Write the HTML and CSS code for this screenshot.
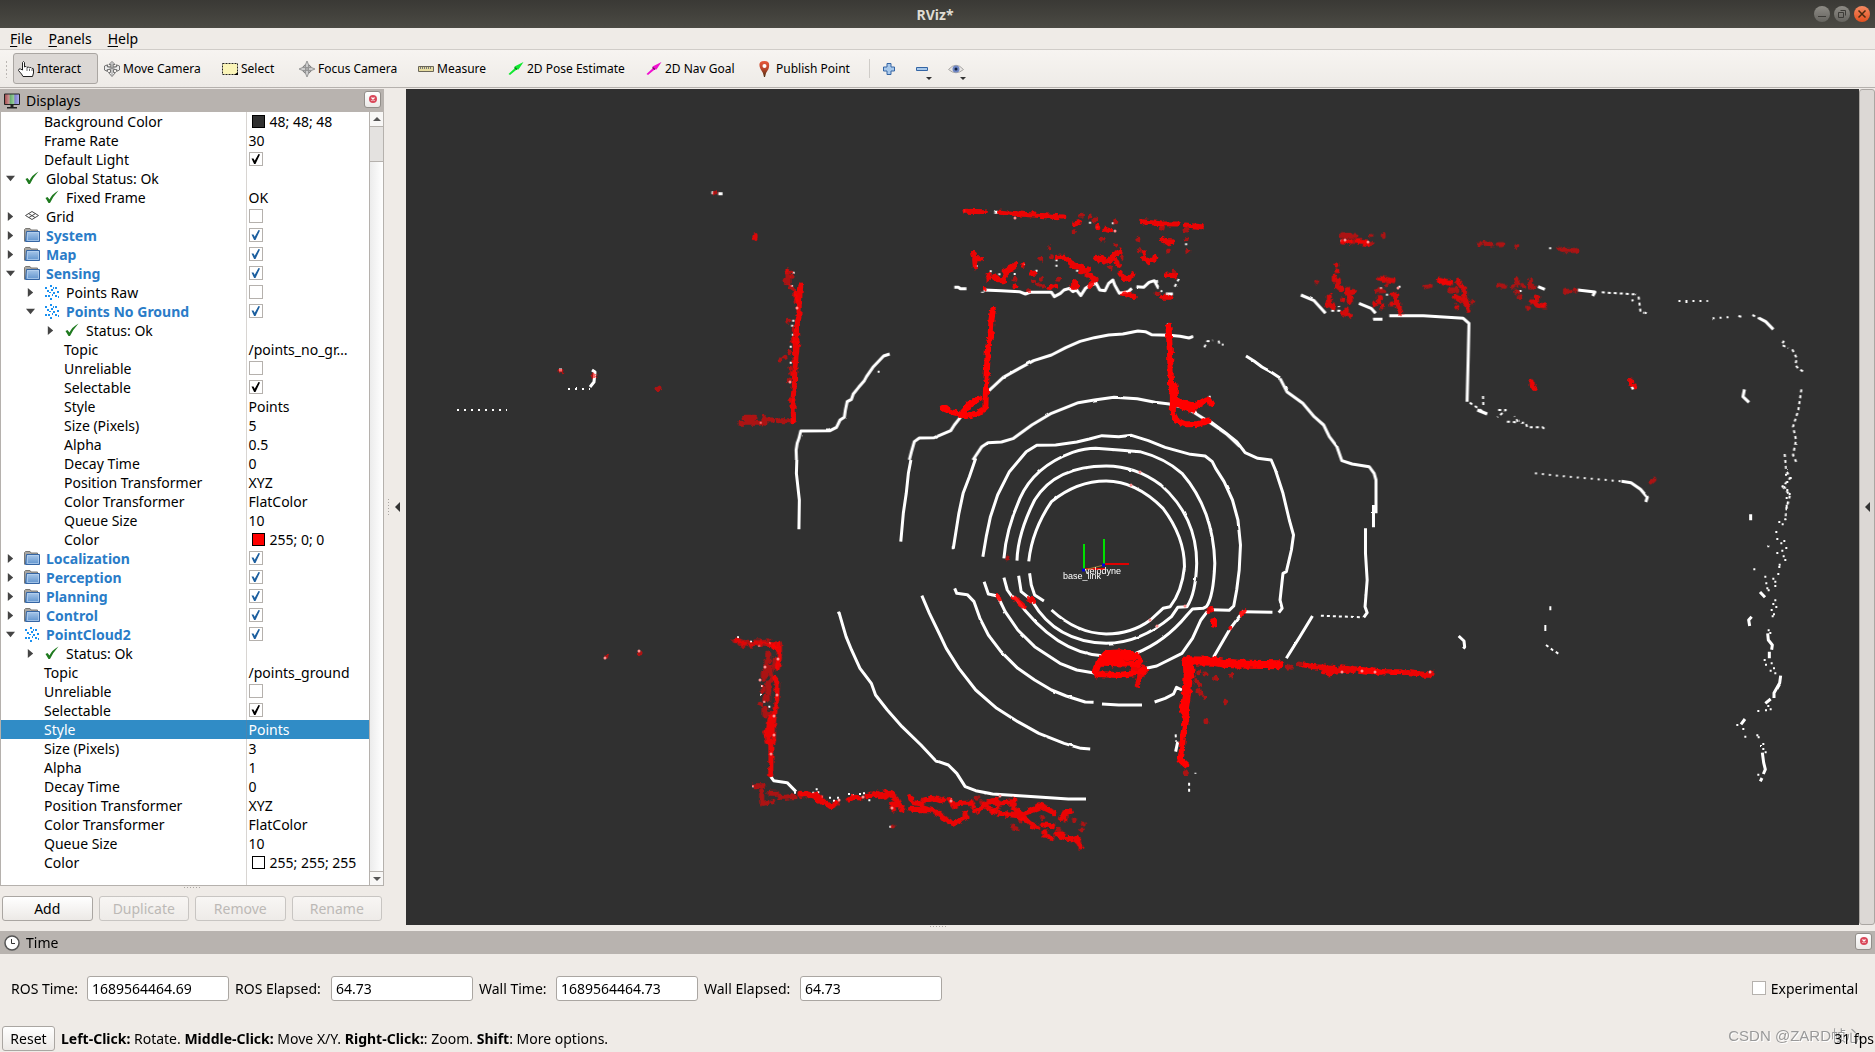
FILE: index.html
```html
<!DOCTYPE html>
<html lang="en">
<head>
<meta charset="utf-8">
<title>RViz*</title>
<link rel="stylesheet" href="styles.css">
</head>
<body>
<svg class="defs" aria-hidden="true">
  <defs>
    <linearGradient id="fold" x1="0" y1="0" x2="0" y2="1"><stop offset="0" stop-color="#a9c8ea"/><stop offset="1" stop-color="#5f93cd"/></linearGradient>
    <linearGradient id="rgb" x1="0" x2="1" y1="0" y2="0"><stop offset="0" stop-color="#a04848"/><stop offset=".33" stop-color="#cf9c9c"/><stop offset=".34" stop-color="#5fa86a"/><stop offset=".66" stop-color="#9fd0a0"/><stop offset=".67" stop-color="#7a7ac8"/><stop offset="1" stop-color="#b0b0f0"/></linearGradient>
    <linearGradient id="pin" x1="0" y1="0" x2="0" y2="1"><stop offset="0" stop-color="#e8583a"/><stop offset=".5" stop-color="#b8452a"/><stop offset="1" stop-color="#4a3010"/></linearGradient>
    <filter id="jitter" filterUnits="userSpaceOnUse" x="406" y="89" width="1453" height="836"><feTurbulence type="fractalNoise" baseFrequency=".22" numOctaves="2" seed="4"/><feDisplacementMap in="SourceGraphic" scale="5" xChannelSelector="R" yChannelSelector="G"/></filter>
    <filter id="jitter-fine" filterUnits="userSpaceOnUse" x="406" y="89" width="1453" height="836"><feTurbulence type="fractalNoise" baseFrequency=".12" numOctaves="1" seed="2"/><feDisplacementMap in="SourceGraphic" scale="2" xChannelSelector="R" yChannelSelector="G"/></filter>
    <symbol id="i-folder" viewBox="0 0 16 16"><path d="M.5 14.500V2.500L1.500 1.500H6l1 1.500h6.500V6" fill="#a8a6a2" stroke="#7a7874"/><path d="M2.500 4.500h13v10h-14z" fill="url(#fold)" stroke="#3465a4"/><path d="M3.500 5.500h11v8h-11z" fill="none" stroke="#b9d3ef" stroke-opacity=".7"/></symbol>
    <symbol id="i-ok" viewBox="0 0 16 16"><path d="M1.500 9 3.500 8 5.500 10.500 Q8 5 14.500 1.500 Q9 7.500 6 14 L4.500 14Z" fill="#1f7a1f"/></symbol>
    <symbol id="i-grid" viewBox="0 0 16 16"><path d="M1.500 7.500 8 3.500l6.500 4L8 11.500zM4.500 5.500l6.500 4M11.500 5.500 5 9.500" fill="none" stroke="#4a4a4a"/></symbol>
    <symbol id="i-cloud" viewBox="0 0 16 16"><path d="M6 1h2v2H6zM1 3h2v2H1zM11 3h2v2h-2zM7 5h2v2H7zM3 6h2v2H3zM13 7h2v2h-2zM9 8h2v2H9zM5 8h2v1H5zM1 11h2v2H1zM4 11h2v2H4zM8 10h1v2H8zM11 11h2v2h-2zM6 14h2v2H6zM14 12h1v2h-1zM9 3h1v2H9z" fill="#1a90f0"/></symbol>
    <symbol id="i-close" viewBox="0 0 8 8"><circle cx="4" cy="4" r="4" fill="#d9485a"/><path d="M2.500 2.500l3 3m0-3-3 3" stroke="#fff" stroke-width="1.200"/></symbol>
  </defs>
</svg>

<header class="titlebar">
  <h1>RViz*</h1>
  <div class="window-buttons">
    <button aria-label="Minimize"><svg viewBox="0 0 16 16"><path d="M4 10.500h8" stroke="#3c3b37"/></svg></button>
    <button aria-label="Restore"><svg viewBox="0 0 16 16"><path d="M4.500 6.500h5v5h-5zM6.500 4.500h5v5" fill="none" stroke="#3c3b37"/></svg></button>
    <button class="quit" aria-label="Close window"><svg viewBox="0 0 16 16"><path d="M4.500 4.500l7 7m0-7-7 7" stroke="#4a2a10" stroke-width="1.500"/></svg></button>
  </div>
</header>

<nav class="menubar">
  <a href="#file"><u>F</u>ile</a>
  <a href="#panels"><u>P</u>anels</a>
  <a href="#help"><u>H</u>elp</a>
</nav>

<div class="toolbar" role="toolbar">
  <span class="grip"></span>
  <button class="active"><svg viewBox="0 0 16 16"><path d="M4.500 9V1.500Q5.500-.5 6.500 1.500V6Q8 4.500 9 6.500 10.500 5 11.500 7 13 5.500 14 7.500 15.500 6.500 15.500 9v3l-1 3.500H5L3.500 13 .5 9.500Q1 7 2.500 8z" fill="#fff" stroke="#222"/><path d="M9 7v3m2.500-2v2M14 8v2" stroke="#444" stroke-width=".8"/></svg>Interact</button>
  <button><svg viewBox="0 0 16 16"><path d="M8 .5 11 3.500H9.200V6h3.300V3.800L15.500 5v4l-3 1.500V8.500H9.500v3H11.500L8 15.500 4.500 11.500h2v-3h-3v2L.5 9V5l3-1.200V6h3.300V3.500H5z" fill="#eee" stroke="#666" stroke-width=".9"/><path d="M2 4.500 14 9.500M14 4.500 2 9.500M8 2v12" stroke="#777" stroke-width=".7"/></svg>Move Camera</button>
  <button><svg viewBox="0 0 16 16"><path d="M.5 2.500h15v11H.5z" fill="#fbf5b8" stroke="#222" stroke-dasharray="2 1"/><path d="M16 11v3h-4z" fill="#000"/></svg>Select</button>
  <button><svg viewBox="0 0 16 16"><circle cx="8" cy="8" r="4.500" fill="#e4e4e4" stroke="#777"/><path d="M8 0l1.500 3.500v9L8 16l-1.500-3.500v-9zM0 8l3.500-1.500h9L16 8l-3.500 1.500h-9z" fill="#ccc" stroke="#888" stroke-width=".8"/><path d="M5 5l6 6m0-6-6 6" stroke="#999" stroke-width=".7"/></svg>Focus Camera</button>
  <button><svg viewBox="0 0 16 16"><path d="M.5 5.500h15v5H.5z" fill="#e6dca0" stroke="#6a6658"/><path d="M2.500 6v2m2-2v2m2-2v2m2-2v2m2-2v2m2-2v2" stroke="#777"/></svg>Measure</button>
  <button><svg viewBox="0 0 16 16"><path d="M.5 13 7 7l-.5-1.500L15.500 1 10.500 8.500 9 8.200 2 14z" fill="#10e830"/><path d="M6.500 6.500 9 8.500" stroke="#087818" stroke-width="1.500"/></svg>2D Pose Estimate</button>
  <button><svg viewBox="0 0 16 16"><path d="M.5 13 7 7l-.5-1.500L15.500 1 10.500 8.500 9 8.200 2 14z" fill="#f010d0"/><path d="M6.500 6.500 9 8.500" stroke="#700860" stroke-width="1.500"/></svg>2D Nav Goal</button>
  <button><svg viewBox="0 0 16 16"><path d="M7 16Q6 11 3.500 8 0 0 7.500 0 14 0 11.500 8 9 11 8 16z" fill="url(#pin)"/><circle cx="7.500" cy="5" r="2" fill="#fff"/></svg>Publish Point</button>
  <span class="rule"></span>
  <button class="tiny" aria-label="Add tool"><svg viewBox="0 0 16 16"><path d="M6 2.500h4V6h3.500v4H10v3.500H6V10H2.500V6H6z" fill="#a8c8ea" stroke="#3465a4"/></svg></button>
  <button class="tiny menu" aria-label="Remove tool"><svg viewBox="0 0 16 16"><path d="M2.500 6.500h11v3h-11z" fill="#a8c8ea" stroke="#3465a4"/></svg></button>
  <button class="tiny menu" aria-label="Toolbar visibility"><svg viewBox="0 0 16 16"><path d="M.5 8.500Q8 0 15.500 8.500 8 15 .5 8.500z" fill="#e8e6e4" stroke="#a8a6a4"/><circle cx="8" cy="8" r="3.500" fill="#6f86c4"/><circle cx="8" cy="8" r="1.500" fill="#102040"/></svg></button>
</div>

<main class="work">
  <section class="displays">
    <header class="dock-title">
      <svg class="ic" viewBox="0 0 16 16"><path d="M.5 1h15v10.500H.5z" fill="url(#rgb)" stroke="#222"/><path d="M6.500 12h3v2h-3zM3 14h10v1.500H3z" fill="#222"/></svg>
      <h2>Displays</h2>
      <button class="dock-close" aria-label="Close Displays"><svg><use href="#i-close"/></svg></button>
    </header>
    <div class="tree-frame">
      <table class="tree">
        <tbody>
        <tr class="l1"><th>Background Color</th><td><i class="swatch grey"></i>48; 48; 48</td></tr>
        <tr class="l1"><th>Frame Rate</th><td>30</td></tr>
        <tr class="l1"><th>Default Light</th><td><input type="checkbox" checked aria-label="Default Light"></td></tr>
        <tr class="l0 open"><th><svg class="ic"><use href="#i-ok"/></svg>Global Status: Ok</th><td></td></tr>
        <tr class="l1"><th><svg class="ic"><use href="#i-ok"/></svg>Fixed Frame</th><td>OK</td></tr>
        <tr class="l0 shut"><th><svg class="ic"><use href="#i-grid"/></svg>Grid</th><td><input type="checkbox" aria-label="Grid"></td></tr>
        <tr class="l0 shut on"><th><svg class="ic"><use href="#i-folder"/></svg>System</th><td><input type="checkbox" checked aria-label="System"></td></tr>
        <tr class="l0 shut on"><th><svg class="ic"><use href="#i-folder"/></svg>Map</th><td><input type="checkbox" checked aria-label="Map"></td></tr>
        <tr class="l0 open on"><th><svg class="ic"><use href="#i-folder"/></svg>Sensing</th><td><input type="checkbox" checked aria-label="Sensing"></td></tr>
        <tr class="l1 shut"><th><svg class="ic"><use href="#i-cloud"/></svg>Points Raw</th><td><input type="checkbox" aria-label="Points Raw"></td></tr>
        <tr class="l1 open on"><th><svg class="ic"><use href="#i-cloud"/></svg>Points No Ground</th><td><input type="checkbox" checked aria-label="Points No Ground"></td></tr>
        <tr class="l2 shut"><th><svg class="ic"><use href="#i-ok"/></svg>Status: Ok</th><td></td></tr>
        <tr class="l2"><th>Topic</th><td>/points_no_gr…</td></tr>
        <tr class="l2"><th>Unreliable</th><td><input type="checkbox" aria-label="Unreliable"></td></tr>
        <tr class="l2"><th>Selectable</th><td><input type="checkbox" checked aria-label="Selectable"></td></tr>
        <tr class="l2"><th>Style</th><td>Points</td></tr>
        <tr class="l2"><th>Size (Pixels)</th><td>5</td></tr>
        <tr class="l2"><th>Alpha</th><td>0.5</td></tr>
        <tr class="l2"><th>Decay Time</th><td>0</td></tr>
        <tr class="l2"><th>Position Transformer</th><td>XYZ</td></tr>
        <tr class="l2"><th>Color Transformer</th><td>FlatColor</td></tr>
        <tr class="l2"><th>Queue Size</th><td>10</td></tr>
        <tr class="l2"><th>Color</th><td><i class="swatch red"></i>255; 0; 0</td></tr>
        <tr class="l0 shut on"><th><svg class="ic"><use href="#i-folder"/></svg>Localization</th><td><input type="checkbox" checked aria-label="Localization"></td></tr>
        <tr class="l0 shut on"><th><svg class="ic"><use href="#i-folder"/></svg>Perception</th><td><input type="checkbox" checked aria-label="Perception"></td></tr>
        <tr class="l0 shut on"><th><svg class="ic"><use href="#i-folder"/></svg>Planning</th><td><input type="checkbox" checked aria-label="Planning"></td></tr>
        <tr class="l0 shut on"><th><svg class="ic"><use href="#i-folder"/></svg>Control</th><td><input type="checkbox" checked aria-label="Control"></td></tr>
        <tr class="l0 open on"><th><svg class="ic"><use href="#i-cloud"/></svg>PointCloud2</th><td><input type="checkbox" checked aria-label="PointCloud2"></td></tr>
        <tr class="l1 shut"><th><svg class="ic"><use href="#i-ok"/></svg>Status: Ok</th><td></td></tr>
        <tr class="l1"><th>Topic</th><td>/points_ground</td></tr>
        <tr class="l1"><th>Unreliable</th><td><input type="checkbox" aria-label="Unreliable"></td></tr>
        <tr class="l1"><th>Selectable</th><td><input type="checkbox" checked aria-label="Selectable"></td></tr>
        <tr class="l1 selected"><th>Style</th><td>Points</td></tr>
        <tr class="l1"><th>Size (Pixels)</th><td>3</td></tr>
        <tr class="l1"><th>Alpha</th><td>1</td></tr>
        <tr class="l1"><th>Decay Time</th><td>0</td></tr>
        <tr class="l1"><th>Position Transformer</th><td>XYZ</td></tr>
        <tr class="l1"><th>Color Transformer</th><td>FlatColor</td></tr>
        <tr class="l1"><th>Queue Size</th><td>10</td></tr>
        <tr class="l1"><th>Color</th><td><i class="swatch white"></i>255; 255; 255</td></tr>
        <tr class="filler"><th></th><td></td></tr>
        </tbody>
      </table>
      <div class="scrollbar"><span class="step up"></span><span class="thumb"></span><span class="step down"></span></div>
    </div>
    <span class="hgrip"></span>
    <div class="actions">
      <button>Add</button>
      <button disabled>Duplicate</button>
      <button disabled>Remove</button>
      <button disabled>Rename</button>
    </div>
  </section>
  <div class="splitter"><span class="vgrip"></span><span class="left-arrow"></span></div>

  <svg class="view" viewBox="406 89 1453 836" preserveAspectRatio="xMidYMid slice" role="img" aria-label="Lidar point cloud">
    <g class="ground" filter="url(#jitter-fine)">
      <path d="M1246 356l8 5 8 6 9 5 9 6"/>
      <path class="spaced" d="M457 410h50M568 389h22"/>
      <path d="M590 387l4-5 1-10-3-2M559 370h3"/>
      <!-- far arcs and the wall line north of the vehicle -->
      <g transform="translate(680 180) scale(.35714 .33333)">
        <path d="M587 522 570 528 540 562 522 590 516 602 500 622 485 642 480 658 468 665 463 690 460 712 448 720 438 742 420 752 338 753 333 775 328 790 325 810 326 840"/>
        <path d="M785 712 768 735 758 752 712 773 670 774 656 785 648 815 642 840"/>
        <path d="M865 632 905 592 950 565 990 542 1040 525 1080 503 1120 484 1160 473 1200 465 1240 462 1282 453 1303 455 1320 464 1370 466 1400 469 1425 474 1437 469"/>
        <path d="M820 840 845 800 862 788 900 786 932 776 985 735 1040 700 1115 668 1160 660 1215 652 1280 656 1330 667 1370 672 1420 685 1485 728 1530 762 1568 800"/>
        <path d="M768 322h12l4 4h18M850 330 900 332 950 335 967 342 980 337 1040 337 1048 350 1065 340 1075 330 1090 325 1100 335 1110 330 1122 347 1135 325 1150 315 1165 310 1175 330 1190 332 1200 310 1212 300 1217 315 1230 340 1255 335 1265 325M1278 320l20 2 15-15 15-5 10 20M1360 342h20M88 38h5m14 3h12M880 97h10M795 92h3M847 335v3"/>
        <path class="sparse" d="M1335 300 1338 325 1350 335M1385 320 1400 290M1468 502l8-18 16-3M1508 482l2 10 12 2"/>
        <path class="pt" d="M318 278v0M313 318v0M317 422v0M314 437v0M316 464v0M310 500v0M310 548v0M226 728v0M556 575v0M1148 128v0M1168 142v0M1212 130v0M1417 193v0M1054 241v0M1054 257v0M1112 272v0M998 272v0M962 252v0M870 274v0M894 283v0M937 282v0M1367 433v0M1483 650v0M830 258v0"/>
      </g>
      <!-- concentric rings around the vehicle -->
      <g transform="translate(740 420) scale(.42092 .33333)">
        <path d="M135 120 134 160 141 240 140 328"/>
        <path d="M406 120 400 160 395 220 388 280 382 365"/>
        <path d="M560 115 545 170 530 220 520 280 507 383h-4"/>
        <path d="M1118 5 1150 35 1180 65 1200 98 1230 115 1262 120 1272 150 1290 220 1305 300 1315 345 1310 390 1298 455 1290 460 1283 540 1288 565 1280 578"/>
        <path d="M577 410 585 350 595 290 612 225 640 155 680 95 705 76 750 75 800 66 830 57 860 47 900 50 930 46 970 62 1010 82 1070 103 1105 108 1122 125 1130 145 1150 185 1170 240 1183 300 1189 375 1186 450 1180 510 1173 558 1162 571 1120 569"/>
        <path d="M627 415Q632 330 665 235T790 97Q820 85 845 85L900 90 950 95Q1010 115 1050 160 1125 270 1128 430 1125 530 1108 560L1100 565 1075 567 1062 585Q1010 665 940 700"/>
        <path d="M658 422Q660 340 700 240 750 138 870 138 940 138 1000 195 1085 290 1085 430 1083 520 1062 560L1040 562 1025 590Q950 670 870 670 750 665 695 545"/>
        <path d="M686 424Q694 330 740 245 800 183 870 183 940 183 1005 265 1056 350 1056 440 1050 515 1022 560L1005 565 975 600Q930 642 870 642 800 640 740 570"/>
        <path d="M688 460 692 495 700 525 712 535 722 543M662 467 668 515 688 535M627 473 635 510 645 528 655 535Q750 700 862 707"/>
        <path d="M580 485 590 522 612 528 630 575 660 630 700 680 760 730 800 750 845 760M965 745 990 738 1050 700 1075 655 1095 600 1110 575"/>
        <path d="M510 505 515 520 540 524 556 545 570 595 590 645 620 695 660 745 700 780 740 810 775 828 820 846 840 847M860 852 900 855 955 855M985 846 1010 835 1030 822 1037 802 1050 810"/>
        <path d="M432 527 450 580 475 645 490 685 520 745 560 810 610 865 660 905 710 940 770 970 810 985 832 987"/>
        <path d="M234 572 245 620 252 650 265 690 285 745 312 790 322 825 350 870 385 920 430 975 465 1022 495 1035 515 1060 535 1100 560 1112 600 1122 700 1130 780 1137 822 1137"/>
        <path d="M1486 325 1486 400 1490 480 1485 560 1490 578 1482 592M1505 255v67M1360 588 1330 650 1298 715M1265 577 1195 575 1165 625 1125 712"/>
        <path class="sparse" d="M1380 587 1480 592M1035 943 1036 965M1067 1088v30M1082 1058v3"/>
        <path d="M1040 965 1035 995"/>
        <path d="M73 1070 80 1082 112 1088 133 1115"/>
      </g>
      <!-- north-east building -->
      <g transform="translate(1280 180) scale(.37946 .33333)">
        <path d="M0 595 18 635 60 670 90 710 115 735 130 770 150 800 163 842 190 852 235 860 248 880 253 900 253 1000"/>
        <path d="M55 345 90 362 120 400M208 370 240 385 252 400M245 418h25M288 407h30l60 0 105 8 15 15-2 100-3 135M680 320l18 8M785 330l45 6-6 12"/>
        <path class="sparse" d="M848 337 935 343M928 358l2 6M945 350l5 45 14 5M1208 408l10 3M1245 405 1262 415M500 668 545 702M535 648 536 680M575 690h20l-22 22M598 725l30 2-10-18M635 728h12l5 14h40l6 6M135 392h22l-2-14"/>
        <path class="spaced" d="M672 880 740 888 900 904M1050 363 1128 363M1140 415 1188 411"/>
        <path d="M1262 414 1280 425 1300 448M900 904 925 908 950 928 968 952 964 966M1224 628 1220 650 1236 667M932 622l-6 4M520 690l26 12"/>
        <path class="sparse" d="M1328 482 1322 495 1340 504M1350 508 1362 535 1358 555 1368 568 1382 576M1374 628 1366 690 1352 740 1360 780 1352 825 1362 850M1330 822 1334 870 1344 895 1325 920 1344 945 1335 985 1332 1020"/>
        <path class="pt" d="M712 205v0M315 320v0M266 325v0M282 344v0M634 333v0M162 182v0"/>
      </g>
      <!-- east edge -->
      <g transform="translate(1360 470) scale(.33333)">
        <path class="pt" d="M1278 14v0M1292 24v0M1282 36v0M1268 49v0M1282 60v0M1289 72v0M1280 84v0M1280 107v0M1280 113v0M1276 148v0M1258 156v0M1268 163v0M1249 186v0M1252 207v0M1273 213v0M1264 220v0M1225 229v0M1279 234v0M1267 242v0M1252 249v0M1271 259v0M1276 270v0M1259 284v0M1258 291v0M1255 312v0M1183 298v0M1216 320v0M1240 326v0M1246 335v0M1219 340v0M1246 348v0M1222 355v0M1226 361v0M1246 391v0M1240 402v0M1249 411v0M1235 420v0M1242 433v0M1238 439v0M1226 481v0M1231 489v0M1214 570v0M1235 580v0M1218 584v0M1242 595v0M1232 602v0M1246 610v0M1225 708v0M1232 718v0M1218 721v0M1195 723v0M1132 765v0M1150 777v0M1156 800v0M1192 796v0M1196 802v0M1210 822v0M1203 828v0M1210 837v0M1217 847v0M1195 914v0M571 412v6M556 468v12"/>
        <path d="M1200 366l15 16M1172 133v18M1175 440l-9 10 3 18M1223 490l2 20 12 15-2 14M1228 545v20M1262 617l-3 22-17 30v15M1232 687l-16 13M1155 747l-12 16M1207 848l4 30 5 20-6 14M1206 924l-5 10M296 498l16 15 2 18-4 5"/>
        <path class="sparse" d="M558 525l20 15 22 14"/>
      </g>
      <!-- scattered returns along the south wall -->
      <g transform="translate(720 600) scale(.33333)">
        <path class="pt" d="M54 112v0M93 125v0M118 137v0M150 130v0M126 258v0M123 284v0M133 305v0M148 320v0M290 568v0M295 577v0M306 590v0M330 593v0M354 593v0M387 582v0M398 585v0M420 582v0M432 580v0M448 601v0M511 680v0M99 556v0M693 597v0M225 578v0M280 578v0M342 602v0"/>
      </g>
    </g>

    <g class="objects" filter="url(#jitter)">
      <g transform="translate(680 180) scale(.35714 .33333)">
        <path d="M798 94 855 95M895 97 960 103 1072 111M1295 125 1345 131 1393 132M1415 135 1460 140"/>
        <path class="wide" d="M876 390 872 420 870 460 862 510 858 600 856 650 855 685 835 700 800 708 770 700 735 684M790 700 815 670 838 655M1368 440 1372 520 1375 610 1380 650 1380 700 1390 722 1415 733 1450 732 1480 722M1385 615 1386 660 1440 680 1475 658 1492 672M1385 670 1435 692"/>
        <path d="M338 318 334 370 333 410 326 440 328 500 322 560 320 620 316 660 318 722M325 340 333 370M322 478l2 50"/>
        <path class="dim" d="M300 274v0M314 292v0M308 320v0M320 348v0M318 330v0M325 362v0M302 424v0M320 450v0M316 480v0M308 516v0M294 532v0M280 540v0M318 535v0M308 565v0M310 580v0M306 600v0M330 490v0M311 660v0M210 164v10M98 40v0M168 730h55M182 715h28M235 712v18M245 720h15M275 722h40M1035 203v0M1124 106v0M1148 108v0M1162 120v0M1104 155v0M1182 178v0M1220 125v0M1221 196v0M1282 178v0M1417 150v0M1417 178v0M1422 214v0M1368 213v0M1350 142v0M1010 238v0M1040 230v0M1204 263v0M938 298v0M1012 298v0M990 305v0M1004 315v0M1018 320v0M1060 298v0M976 332v0M1336 342v0M1384 274v0M1286 212v0M1238 232v0"/>
        <path d="M822 220l5 15 18 2M825 238l2 26M862 298l4-14M880 290l20 12 12-20 10-12 15-5M890 302h16M908 272l28-14M940 248v0M960 256v0M985 280h12M938 320v0M1035 322l16-6M1080 234l18 16 18 10M1058 232h18M1100 260h20l16 14M1125 278l22-10M1140 285l22 12M1105 302v12M1165 232l20 14 18-6M1180 230l10 14M1210 228l22-12M1215 235l12 20M1232 280l14 18 22-14M1240 292l20 4M1145 320l12-14M1350 175l20 16M1300 218v0M1298 232l14 14 20-14M1362 285l24 2M1348 352h24M1242 342l30 8M1105 132l12-4M1190 148l14 4M1170 140v0M1098 322h16M852 328v0M1355 185l22 0"/>
      </g>
      <g transform="translate(740 420) scale(.42092 .33333)">
        <path class="wide" d="M845 760 852 725 870 700 905 697 940 705 953 722 945 732 860 728M870 715 940 712M845 762 900 765 948 758 962 750"/>
        <path d="M945 740 950 770 944 795M848 768v0M885 735v0M935 732v20M958 740v22"/>
        <path class="fat" d="M1062 722 1125 724 1150 730 1180 732 1280 734"/>
        <path class="fat" d="M1062 722 1065 770 1060 830 1055 870"/>
        <path class="wide" d="M1055 860 1060 900 1052 950 1050 990 1046 1020 1060 1036M1070 730 1075 770"/>
        <path class="wide" d="M1126 604v10"/>
        <path d="M612 530 618 540M652 535 662 545 675 560M688 535 697 545M1112 575 1120 568M1192 582 1198 574M1166 625v0"/>
        <path class="dim" d="M635 414v0M1090 758v0M1105 762v0M1130 775v0M1168 765v0M1085 785v0M1092 795v0M1088 812v0M1095 822v0M1104 832v0M1154 846v0M1107 905v0M1058 1058v0M1300 742v0M1310 742v0M1328 732v0M1345 735v0"/>
        <path d="M1340 735l40 8 35 5M1360 740l50 2M1385 755l60-4M1400 742v20M1430 740l60 12 78 6M1455 745v10M1520 755h48"/>
      </g>
      <g transform="translate(1280 180) scale(.37946 .33333)">
        <path class="dim" d="M162 167h38M165 184h60M226 190h14M240 166v0M272 166v0M526 190v0M540 190l18 5M575 194h12M624 199v0M738 206l8 5h34M97 305v0M382 320l14-3M420 300l30 10M448 330h18M578 316l14 3M615 320v0M625 298v14M640 316v0M660 302v16M668 322v0M624 335v0M633 350v0M752 334h12M778 330v0M508 365v0M700 378v0M655 382v0M978 906l8-8M262 296v0M281 314v0M254 332h18"/>
        <path class="soft" d="M150 255v0M150 272v0M143 290v10M154 300v12M150 318l12 10M178 325v16M130 350v14M125 375h14M140 384v0M180 345l14-10M185 355v14M165 360v0M165 400l18 6M175 390v0M268 296l30 6M250 372v0M262 352v14M270 380v0M296 345h12M305 355v16M312 375l6 22M295 372v0M420 302l28 8M468 304l14 20M486 325v28M462 350l24 16M490 362l6 26M466 380v0M676 350v12M665 365l15 10 14 2M165 186l20 0M205 186l25 4"/>
        <path d="M662 605v12l14 10M924 600v12l10 8"/>
      </g>
      <g transform="translate(1360 470) scale(.33333)">
        <path class="wide" d="M0 600 35 603 60 605"/><path d="M35 598 75 606M98 607 150 608 205 614M190 616h20l6-10"/>
      </g>
      <g transform="translate(720 600) scale(.33333)">
        <path d="M178 130 178 175 172 205M160 140 175 150M165 235 172 250 170 300 165 330 160 370 160 425M152 425 153 470 152 525M158 350 146 365 140 400 145 425M150 375 148 400"/>
        <path class="dim" d="M42 122h12M60 130l10 4M93 136v0M105 126h18M135 126h12M150 134h12M146 162v20M138 186v40M130 218v20M150 200v14M165 180v20M155 224v16M130 262v10M146 248v28M135 292v12M145 288v12M120 313v0M135 325v20M150 340v12M132 398v0M105 557h24M125 572v34M130 610l12-3M150 580h20M158 606v0M178 592h22M205 590h20M245 590v0M352 610v0M518 678v0M1090 672v0M1084 690v0M1016 688v0M1060 660v0M968 653v0M888 686v0M878 678v0M860 640v0M905 660v0M785 605v0M770 595v0M820 632v0M885 600v0"/>
        <path d="M240 580 265 582 285 590 300 605 320 612 335 622 345 610M290 582 310 600M385 600 400 592 420 594M440 590l20-6 20 6M465 578l30 14 15-12 20 18M497 574l18 10M520 585l10 30M530 600l18 30M515 612l6 18M568 590l12 18 25 4M570 628h28l16-6 22 6M605 632h25M632 592v6M612 600l30-4 18 6M660 640l10 14M645 635l20 14 25 16 8 8 20-10 20-14M690 600l16 22M672 600v0M700 612l30-2 22 0M735 640v14M752 605l6 14M765 635l20-12 18-18 26-4M800 620l20 18 14-18M805 605l40 4 30-4M838 640l30 4 40 4 20 18 22 14M880 625l26 18 50-20M930 632l30-18 28 14M960 618l42 20M880 600v14M912 655l24 22M900 650l50 32M975 695v14M985 710l10 6M1010 705l30 10 35 4M1070 715l12 26M1022 655l8-16 22-4M1035 640v20M970 675l28 2M1008 702l22 0"/>
      </g>
      <path class="dim" d="M660 388v0M658 389v0M607 656v0M640 653v0M790 272v0M785 281v0M755 237v0M561 371v0M594 376v0M788 271v12"/>
      <path class="dim" d="M736 640l10 3 30 2"/>
    </g>
    <g class="speckle">
      <path d="M1015 218v0M1115 231v0M797 308v0M790 382v0M778 659v0M777 695v0M774 716v0M771 754v0M839 800v0M863 797v0M1362 671v0M1375 672v0M1430 672v0M605 658v0M639 651v0M892 808v0M951 801v0M1000 796v0M1140 472v0M1131 485v0M1185 606v0M1150 620v0M1157 626v0M760 680v0M765 667v0M774 735v0M1342 672v0M1345 240v0M1368 242v0M1398 288v0"/>
    </g>

    <g class="axes">
      <path class="y" d="M1084 544v26M1104 539v26"/>
      <path class="x" d="M1105 564h24M1085 569h20"/>
      <path class="link" d="M1084 570 1104 565"/>
      <path class="z" d="M1082 570h3M1102 565h3"/>
      <text x="1063" y="579">base_link</text>
      <text x="1085" y="574">velodyne</text>
    </g>
  </svg>
  <div class="side-handle"><span class="left-arrow"></span></div>
</main>

<span class="hgrip wide-grip"></span>
<section class="time">
  <header class="dock-title">
    <svg class="ic" viewBox="0 0 16 16"><circle cx="8" cy="8" r="7" fill="#fff" stroke="#555" stroke-width="1.500"/><path d="M7.500 4v4.500H11" fill="none" stroke="#333"/></svg>
    <h2>Time</h2>
    <button class="dock-close" aria-label="Close Time"><svg><use href="#i-close"/></svg></button>
  </header>
  <form class="clocks">
    <label for="rt">ROS Time:</label><input id="rt" type="text" value="1689564464.69" readonly>
    <label for="re">ROS Elapsed:</label><input id="re" type="text" value="64.73" readonly>
    <label for="wt">Wall Time:</label><input id="wt" type="text" value="1689564464.73" readonly>
    <label for="we">Wall Elapsed:</label><input id="we" type="text" value="64.73" readonly>
    <label class="experimental"><input type="checkbox">Experimental</label>
  </form>
</section>

<footer class="status">
  <button>Reset</button>
  <p><b>Left-Click:</b> Rotate. <b>Middle-Click:</b> Move X/Y. <b>Right-Click:</b>: Zoom. <b>Shift</b>: More options.</p>
  <span class="watermark">CSDN @ZARD帧心</span>
  <output>31 fps</output>
</footer>
</body>
</html>
```
FILE: styles.css
```css
* { box-sizing: border-box; }
body {
  margin: 0;
  min-height: 100vh;
  display: flex;
  flex-direction: column;
  background: #efebe7;
  color: #000;
  font: 14px/19px "Noto Sans", "Noto Sans CJK SC", sans-serif;
}
h1, h2, p { margin: 0; font-size: inherit; font-weight: normal; }
button, input { font: inherit; color: inherit; margin: 0; }
svg { display: block; }
.defs { position: absolute; width: 0; height: 0; }
.ic { width: 16px; height: 16px; flex: none; }

/* window frame */
.titlebar {
  height: 28px;
  display: grid;
  grid-template-columns: 1fr auto 1fr;
  align-items: center;
  padding-right: 5px;
  background: linear-gradient(#3a3935, #4b4a44);
}
.titlebar h1 { grid-column: 2; color: #dfdbd2; font-weight: bold; }
.window-buttons { display: flex; justify-content: flex-end; gap: 4px; }
.window-buttons button {
  width: 16px; height: 16px; padding: 0;
  border: 0; border-radius: 50%;
  background: linear-gradient(#8e8c86, #65645f);
}
.window-buttons .quit { background: linear-gradient(#f58a62, #e3501f); }

.menubar {
  height: 22px;
  display: flex;
  gap: 16px;
  padding: 1px 10px 0;
  border-bottom: 1px solid #d0ccc8;
}
.menubar a { color: #000; text-decoration: none; }
.menubar u { text-underline-offset: 2px; }

.toolbar {
  height: 38px;
  display: grid;
  grid-template-columns: 13px 85px 118px 77px 119px 90px 138px 111px 112px 12px 33px 34px 33px;
  align-items: center;
  font-size: 12px;
  background: linear-gradient(#f7f4f1, #eeebe7);
  border-bottom: 1px solid #b5b1ad;
}
.toolbar button {
  height: 31px;
  display: flex;
  align-items: center;
  gap: 3px;
  padding: 0 0 0 5px;
  border: 1px solid transparent;
  border-radius: 3px;
  background: none;
  white-space: nowrap;
}
.toolbar svg { width: 16px; height: 16px; flex: none; }
.toolbar .active { padding-left: 4px; background: #dcd8d5; border-color: #aaa6a2; }
.toolbar .tiny { padding-left: 5px; }
.toolbar .menu { position: relative; }
.toolbar .menu::after {
  content: "";
  position: absolute; left: 17px; bottom: 3px;
  border: 3px solid transparent; border-top-color: #333; border-bottom: 0;
}
.grip { width: 4px; height: 18px; margin-left: 5px; background: radial-gradient(circle, #bbb7b3 1px, transparent 1px) 0 0 / 3px 4px; }
.rule { width: 1px; height: 19px; margin-left: 6px; background: #cfccc8; }

/* work area */
.work { flex: 1; display: flex; padding-top: 1px; }
.displays { width: 384px; flex: none; display: flex; flex-direction: column; }
.dock-title {
  height: 23px;
  display: flex;
  align-items: center;
  gap: 6px;
  padding: 0 3px 0 4px;
  background: #b8b3af;
}
.dock-title h2 { flex: 1; }
.dock-close {
  width: 17px; height: 17px; padding: 0;
  display: grid; place-items: center;
  margin-bottom: 3px;
  border: 1px solid #928e8a; border-radius: 3px;
  background: linear-gradient(#fff, #ebe9e7);
}
.dock-close svg { width: 8px; height: 8px; }

.tree-frame {
  flex: 1;
  display: flex;
  background: #fff;
  border: 1px solid #b5b1ad;
  border-top: 0;
}
.tree { flex: 1; table-layout: fixed; border-collapse: collapse; }
.tree tr { height: 19px; }
.tree .filler { height: auto; }
.tree th, .tree td { padding: 0; line-height: 19px; text-align: left; font-weight: normal; white-space: nowrap; }
.tree th { width: 245px; vertical-align: top; }
.tree td { padding-left: 2px; border-left: 1px solid #d8d5d2; vertical-align: top; }
.tree th .ic { display: inline-block; vertical-align: top; margin: 1px 6px 0 0; }
.l0 th { padding-left: 23px; }
.tree .l1 th { padding-left: 43px; }
.tree .l2 th { padding-left: 63px; }
.tree .on th { color: #2a7cc8; font-weight: bold; }
.tree .l0.open th, .tree .l0.shut th { padding-left: 5px; }
.tree .l1.open th, .tree .l1.shut th { padding-left: 25px; }
.tree .l2.open th, .tree .l2.shut th { padding-left: 45px; }
.open th::before, .shut th::before {
  content: "";
  display: inline-block;
  width: 9px; height: 9px;
  margin: 5px 9px 0 0;
  vertical-align: top;
  background: #444;
}
.open th::before { clip-path: polygon(0 20%, 100% 20%, 50% 80%); }
.shut th::before { clip-path: polygon(20% 0, 80% 50%, 20% 100%); }
.selected { background: #308cc6; color: #fff; }
.tree .selected td { border-color: #4a86b0; }

input[type="checkbox"] {
  appearance: none;
  display: block;
  width: 14px; height: 14px;
  margin-top: 2px;
  border: 1px solid #b5b1ad;
  background: #fff;
}
input[type="checkbox"]:checked::after {
  content: "";
  display: block;
  width: 10px; height: 10px;
  margin: 1px;
  background: #000;
  clip-path: polygon(10% 45%, 30% 45%, 42% 68%, 80% 0, 95% 5%, 50% 100%, 36% 100%);
}
.on input[type="checkbox"]:checked::after { background: #1c5f9f; }
.swatch {
  display: inline-block;
  width: 13px; height: 13px;
  margin: 3px 5px 0 3px;
  vertical-align: top;
  border: 1px solid #000;
}
.grey { background: #303030; }
.red { background: #f00; }
.white { background: #fff; }

.scrollbar {
  width: 14px;
  display: flex;
  flex-direction: column;
  border-left: 1px solid #b5b1ad;
  background: linear-gradient(90deg, #ececec, #fff);
}
.step { height: 14px; display: grid; place-items: center; background: #f8f7f6; }
.step::after { content: ""; border: 4px solid transparent; }
.up::after { border-bottom-color: #555; border-top: 0; }
.down::after { border-top-color: #555; border-bottom: 0; }
.down { margin-top: auto; border-top: 1px solid #b5b1ad; }
.thumb { height: 36px; background: #e4e2e0; border: 1px solid #b5b1ad; border-width: 1px 0; }

.hgrip { width: 18px; height: 4px; margin: 0 auto; background: radial-gradient(circle, #aaa6a2 1px, transparent 1px) 0 0 / 3px 3px repeat-x; }
.wide-grip { height: 6px; }
.actions { display: grid; grid-template-columns: repeat(4, 1fr); gap: 6px; padding: 6px 2px 4px; }
.actions button, .status button {
  height: 25px;
  padding: 0;
  border: 1px solid #aaa6a2;
  border-radius: 3px;
  background: linear-gradient(#fff, #ece9e6);
}
.actions button:disabled { color: #bcb9b6; border-color: #c8c5c2; background: linear-gradient(#f8f6f4, #eeebe8); }

.splitter { width: 22px; flex: none; display: flex; align-items: center; justify-content: space-between; padding: 0 6px 0 3px; }
.vgrip { width: 3px; height: 18px; background: radial-gradient(circle, #aaa6a2 1px, transparent 1px) 0 0 / 3px 3px; }
.left-arrow { border: 5px solid transparent; border-right-color: #333; border-left: 0; }
.side-handle {
  width: 16px; flex: none;
  display: grid; place-items: center;
  background: #dcd8d5;
  border: 1px solid #aaa6a2;
  border-radius: 3px;
}

/* 3D view */
.view { flex: 1; min-width: 0; width: 0; background: #303030; }
.view path { vector-effect: non-scaling-stroke; fill: none; }
.ground { stroke: #fff; stroke-width: 3; stroke-linejoin: round; }
.ground .sparse { stroke-dasharray: 3 3; stroke-width: 2; }
.ground .spaced { stroke-dasharray: 2 5; stroke-width: 2; }
.ground .pt { stroke-linecap: square; stroke-width: 2; }
.objects { stroke: #f00; stroke-width: 5; stroke-linecap: round; stroke-linejoin: round; }
.objects path { stroke-opacity: .9; }
.objects .dim { stroke-opacity: .6; }
.objects .soft { stroke-opacity: .8; }
.objects .wide { stroke-width: 6; stroke-opacity: 1; }
.objects .fat { stroke-width: 9; stroke-opacity: 1; }
.speckle { stroke: #ff9090; stroke-width: 3; stroke-linecap: round; }
.axes .x { stroke: #e00000; stroke-width: 2; }
.axes .y { stroke: #00e000; stroke-width: 2; }
.axes .z { stroke: #0000e0; stroke-width: 3; }
.axes .link { stroke: #a08030; }
.axes text { fill: #fff; font: 9px "Liberation Sans", sans-serif; }

/* time panel */
.clocks {
  display: grid;
  grid-template-columns: 70px 142px 90px 142px 71px 142px 90px 142px 1fr;
  column-gap: 6px;
  align-items: center;
  padding: 22px 17px 24px 11px;
}
.clocks input[type="text"] {
  width: 100%; height: 25px;
  padding: 0 4px;
  border: 1px solid #aaa6a2;
  border-radius: 3px;
  background: #fff;
}
.clocks label { white-space: nowrap; }
.experimental { display: flex; gap: 5px; justify-self: end; }

.status { position: relative; display: flex; align-items: center; gap: 6px; padding: 1px 1px 2px 2px; }
.status button { width: 53px; }
.status p { flex: 1; }
.status output { position: relative; }
.watermark {
  position: absolute; right: 14px; bottom: 6px;
  color: #999; font: 15px/22px "Liberation Sans", "Noto Sans CJK SC", sans-serif;
  text-shadow: 1px 1px 0 #fff;
}
```
